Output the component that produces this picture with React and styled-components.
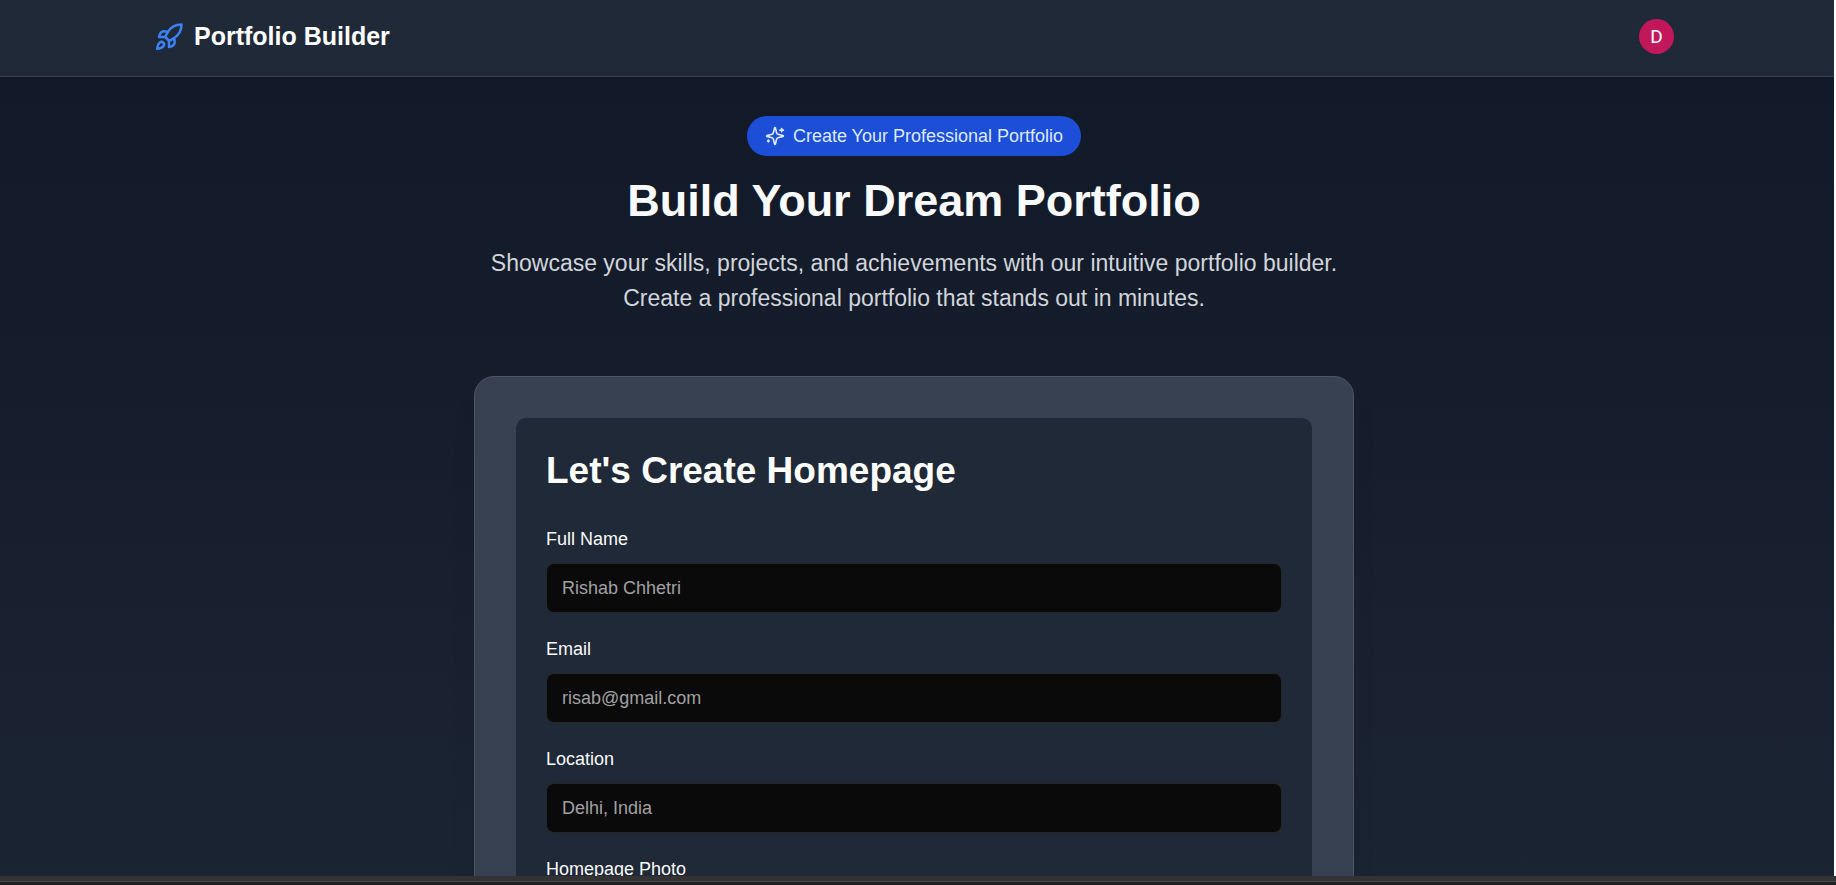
import React from "react";
import styled, { createGlobalStyle } from "styled-components";

const GlobalStyle = createGlobalStyle`
  *, *::before, *::after { box-sizing: border-box; }
  body {
    margin: 0;
    background: #1f1f23;
    font-family: "Liberation Sans", Arial, sans-serif;
  }
  h1, h2, p { margin: 0; }
`;

const Icon = styled.svg.attrs({ viewBox: "0 0 24 24", "aria-hidden": true })`
  flex: none;
  width: ${({ $size }) => $size}px;
  height: ${({ $size }) => $size}px;
  fill: none;
  stroke: currentColor;
  stroke-width: 2;
  stroke-linecap: round;
  stroke-linejoin: round;
`;

const RocketIcon = () => (
  <Icon $size={30}>
    <path d="M4.5 16.5c-1.5 1.26-2 5-2 5s3.74-.5 5-2c.71-.84.7-2.13-.09-2.91a2.18 2.18 0 0 0-2.91-.09z" />
    <path d="m12 15-3-3a22 22 0 0 1 2-3.95A12.88 12.88 0 0 1 22 2c0 2.72-.78 7.5-6 11a22.35 22.35 0 0 1-4 2z" />
    <path d="M9 12H4s.55-3.03 2-4c1.62-1.08 5 0 5 0" />
    <path d="M12 15v5s3.03-.55 4-2c1.08-1.62 0-5 0-5" />
  </Icon>
);

const SparklesIcon = () => (
  <Icon $size={20}>
    <path d="M9.937 15.5A2 2 0 0 0 8.5 14.063l-6.135-1.582a.5.5 0 0 1 0-.962L8.5 9.936A2 2 0 0 0 9.937 8.5l1.582-6.135a.5.5 0 0 1 .963 0L14.063 8.5A2 2 0 0 0 15.5 9.937l6.135 1.581a.5.5 0 0 1 0 .964L15.5 14.063a2 2 0 0 0-1.437 1.437l-1.582 6.135a.5.5 0 0 1-.963 0z" />
    <path d="M20 3v4" />
    <path d="M22 5h-4" />
    <path d="M4 17v2" />
    <path d="M5 18H3" />
  </Icon>
);

const Shell = styled.div`
  display: grid;
  grid-template-rows: minmax(0, 1fr) auto;
  height: 100vh;
`;

const Page = styled.div`
  overflow: hidden;
  border-right: 2px solid #ffffff;
  background: linear-gradient(to bottom, #111827, #1b2432);
`;

const Header = styled.header`
  padding: 19px 6px 22px 0;
  background: #1f2937;
  border-bottom: 1px solid #374151;
`;

const HeaderInner = styled.div`
  display: flex;
  align-items: center;
  justify-content: space-between;
  max-width: 1600px;
  margin: 0 auto;
  padding: 0 40px;
`;

const Brand = styled.a`
  display: flex;
  align-items: center;
  gap: 10px;
  color: #ffffff;
  font-size: 25px;
  line-height: 35px;
  font-weight: 700;
  text-decoration: none;

  svg { color: #3b82f6; }
`;

const Avatar = styled.button`
  width: 35px;
  height: 35px;
  padding: 0;
  border: 0;
  border-radius: 50%;
  background: #c2185b;
  color: #ffffff;
  font: 400 19px/35px Roboto, sans-serif;
`;

const Main = styled.main`
  display: flex;
  flex-direction: column;
  align-items: center;
  padding: 39px 6px 0 0;
`;

const Badge = styled.div`
  display: flex;
  align-items: center;
  gap: 8px;
  height: 40px;
  padding: 0 18px;
  border-radius: 20px;
  background: #1d4ed8;
  color: #dbeafe;
  font-size: 18px;
`;

const Title = styled.h1`
  margin-top: 20px;
  color: #f9fafb;
  font-size: 45px;
  line-height: 50px;
`;

const Lead = styled.p`
  max-width: 860px;
  margin-top: 20px;
  color: #d1d5db;
  font-size: 23px;
  line-height: 35px;
  text-align: center;
`;

const Card = styled.section`
  width: 100%;
  max-width: 880px;
  margin-top: 60px;
  padding: 41px;
  border: 1px solid #4b5563;
  border-radius: 20px;
  background: #374151;
  box-shadow: 0 25px 30px -6px rgba(0, 0, 0, 0.1);
`;

const Form = styled.form`
  display: flex;
  flex-direction: column;
  gap: 26px;
  padding: 30px;
  border-radius: 10px;
  background: #1f2937;
`;

const FormTitle = styled.h2`
  margin-bottom: 10px;
  color: #ffffff;
  font-size: 37px;
  line-height: 45px;
`;

const Field = styled.div`
  display: flex;
  flex-direction: column;
  gap: 14px;
`;

const Label = styled.label`
  color: #fafafa;
  font-size: 18px;
  line-height: 20px;
`;

const Input = styled.input`
  width: 100%;
  height: 50px;
  padding: 0 15px;
  border: 1px solid #262626;
  border-radius: 8px;
  background: #0a0a0a;
  color: #fafafa;
  font: 400 18px "Liberation Sans", Arial, sans-serif;

  &::placeholder { color: #a1a1a1; opacity: 1; }
  &[type="file"] { padding: 12px 15px; }
`;

const BottomBar = styled.div`
  height: 9px;
  border-top: 5px solid #333333;
  background: linear-gradient(to bottom, #4a4a4c 1px, #1f1f23 1px);
`;

const fields = [
  { id: "name", label: "Full Name", type: "text", placeholder: "Rishab Chhetri" },
  { id: "email", label: "Email", type: "email", placeholder: "risab@gmail.com" },
  { id: "location", label: "Location", type: "text", placeholder: "Delhi, India" },
  { id: "photo", label: "Homepage Photo", type: "file" },
];

export default function App() {
  return (
    <Shell>
      <GlobalStyle />
      <Page>
        <Header>
          <HeaderInner>
            <Brand href="#">
              <RocketIcon />
              Portfolio Builder
            </Brand>
            <Avatar type="button">D</Avatar>
          </HeaderInner>
        </Header>
        <Main>
          <Badge>
            <SparklesIcon />
            Create Your Professional Portfolio
          </Badge>
          <Title>Build Your Dream Portfolio</Title>
          <Lead>
            Showcase your skills, projects, and achievements with our intuitive
            portfolio builder. Create a professional portfolio that stands out in minutes.
          </Lead>
          <Card>
            <Form>
              <FormTitle>Let's Create Homepage</FormTitle>
              {fields.map(({ id, label, type, placeholder }) => (
                <Field key={id}>
                  <Label htmlFor={id}>{label}</Label>
                  <Input id={id} type={type} placeholder={placeholder} />
                </Field>
              ))}
            </Form>
          </Card>
        </Main>
      </Page>
      <BottomBar />
    </Shell>
  );
}
